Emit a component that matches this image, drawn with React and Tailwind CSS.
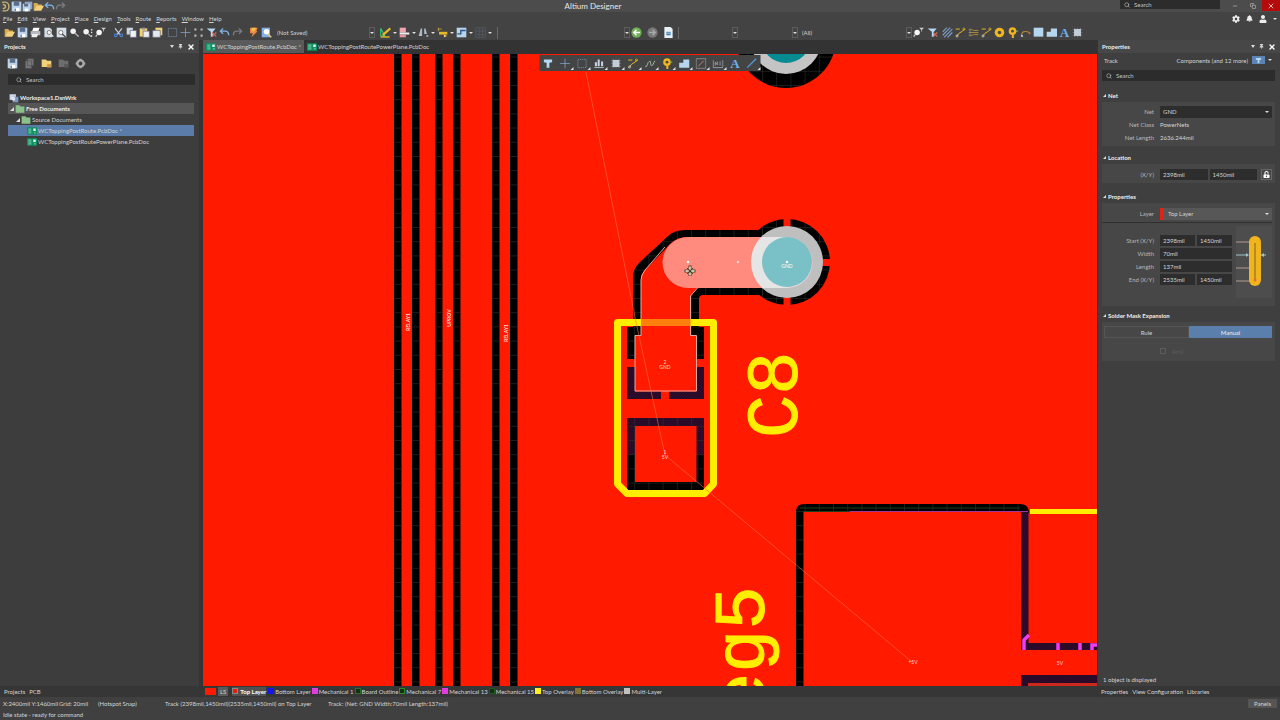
import React from 'react';
import { FiCopy, FiMinus, FiSearch, FiX } from 'react-icons/fi';
import { FaBell, FaCog, FaUser, FaThumbtack, FaUnlockAlt } from 'react-icons/fa';

const PAPER = '#d5dde6';
const STEEL = '#b9d3ec';
const GOLD = '#e8b923';
const SAND = '#f2cf7a';

const GLYPHS = {
  open: <><path d="M1 3h5l2 2h5v3H5l-4 6z" fill="#d9ab4e" /><path d="M5 7h11l-4 7H1z" fill={SAND} /></>,
  save: <><path d="M1 1h14v14H1z" fill={STEEL} /><path d="M4 1h8v6H4z" fill="#5b6f8c" /><path d="M4 10h8v5H4z" fill="#fff" /><path d="M5 11h2v4H5z" fill="#5b6f8c" /></>,
  saveAll: <><path d="M4 1h11v11H4z" fill="#8fa5c8" /><path d="M1 4h11v11H1z" fill={STEEL} /><path d="M3 4h6v4H3z" fill="#5b6f8c" /><path d="M4 11h5v4H4z" fill="#fff" /></>,
  print: <><path d="M5 1h9l-2 5H3z" fill="#fff" /><path d="M1 6h14v6H1z" fill="#b8bcc2" /><path d="M3 10h9l-2 5H2z" fill="#eee" /></>,
  preview: <><path d="M2 1h8l3 3v11H2z" fill={PAPER} /><circle cx="9" cy="8" r="3" fill="#f4f4f4" stroke="#555" /><path d="m11 10 4 4" stroke="#eee" strokeWidth="2" /></>,
  docFind: <><path d="M1 1h14v14H1z" fill={PAPER} /><circle cx="7" cy="8" r="3" fill="#fff" stroke="#555" /><path d="m9 10 5 5" stroke="#444" strokeWidth="2" /></>,
  zoom: <><circle cx="6" cy="6" r="4" fill="#f2f2f2" /><path d="m9 9 5 5" stroke="#bbb" strokeWidth="2" /></>,
  zoomArea: <><circle cx="6" cy="7" r="4" fill="#f2f2f2" /><path d="m9 10 4 4" stroke="#bbb" strokeWidth="2" /><path d="M13 3h2v2h-2zM13 7h2v2h-2zM13 12h2v2h-2z" fill="#ddd" /></>,
  zoomFilter: <><circle cx="6" cy="8" r="4" fill="#f8f8f8" /><path d="m3 11-2 3" stroke="#ccc" strokeWidth="2" /><path d="M9 1h7l-3 3v3l-1-1V4z" fill="#cfd5dc" /></>,
  cut: <><path d="m3 2 7 9M13 2 6 11" stroke="#c8d4e4" strokeWidth="1.6" /><circle cx="4" cy="12" r="2" fill="none" stroke="#4f7fd0" strokeWidth="1.6" /><circle cx="12" cy="12" r="2" fill="none" stroke="#4f7fd0" strokeWidth="1.6" /></>,
  copy: <><path d="M1 1h9v10H1z" fill="#c9d6e2" /><path d="M6 5h9v10H6z" fill="#f0f4f8" stroke="#667" /></>,
  paste: <><path d="M1 2h11v12H1z" fill={SAND} /><path d="M4 1h5v3H4z" fill="#999" /><path d="M6 6h9v9H6z" fill="#e8eef4" stroke="#667" /></>,
  pasteArray: <><path d="M5 1h10v11H5z" fill={SAND} /><path d="M1 5h11v10H1z" fill="#e3e9ef" stroke="#667" /></>,
  marquee: <path d="M2 2h12v12H2z" fill="none" stroke="#7e9cc0" strokeDasharray="2 1" />,
  cross: <path d="M8 1v14M1 8h14" stroke="#7f9dbf" strokeWidth="1.2" />,
  dots: <path d="M2 2h3v3H2zM11 2h3v3h-3zM2 11h3v3H2zM11 11h3v3h-3z" fill="#b8b8b8" />,
  filter: <path d="M2 2h12v4l-4 1v7H6V7L2 6z" fill="#b5d7f2" />,
  filterClear: <><path d="M1 2h13l-4 5v7H7V7z" fill="#b5d7f2" /><path d="m9 8 6 6M15 8l-6 6" stroke="#d46a60" strokeWidth="1.6" /></>,
  undo: <path d="M2 6h7q5 0 5 6M6 2 2 6l4 4" fill="none" stroke="#7fb2e6" strokeWidth="2" />,
  redo: <path d="M14 6H7q-5 0-5 6M10 2l4 4-4 4" fill="none" stroke="#787d82" strokeWidth="2" />,
  bolt: <><path d="M3 1h11l-2 5h2L5 15l2-6H3z" fill="#f08a3c" /><path d="M6 1h6l-3 5H5z" fill="#f8bd50" /></>,
  inspect: <><path d="M1 1h12v14H1z" fill="#82afe8" /><circle cx="8" cy="7" r="4" fill="#fff" /><path d="m10 10 5 5" stroke={SAND} strokeWidth="2" /></>,
  draw: <><path d="M1 2v11h6z" stroke="#39c67a" strokeWidth="1.6" /><path d="m15 2-9 8-2 2" stroke={GOLD} strokeWidth="3" fill="none" /><path d="M1 14.500h13" stroke={GOLD} strokeWidth="2" /></>,
  align: <><path d="M1 1h9v7H1z" fill="#f0a4ac" /><path d="M1 8h14v3H1z" fill="#eee" /><path d="M1 11h9v4H1z" fill="#e4949e" /></>,
  find: <path d="M4 2h2v11H1zM9 2h2l2 8H9zM12 12h3v2h-3z" fill="#aeb9c5" />,
  dimension: <><path d="M1 3h6M2 1v5" stroke="#c99a3c" strokeWidth="1.3" /><path d="M3 7h12v4H3z" fill={GOLD} /><path d="m10 11 5 2-5 2" fill={SAND} /></>,
  room: <><path d="M1 1h14v14H1z" fill={STEEL} /><path d="M2 10h5V5h7" stroke="#2b5687" strokeWidth="2" fill="none" /></>,
  grid: <path d="M1 1h14v14H1zM1 6h14M1 11h14M6 1v14M11 1v14" fill="none" stroke="#51565f" strokeWidth="1.4" />,
  back: <><circle cx="8" cy="8" r="7.5" fill="#6fae55" /><path d="M13 8H4M8 4 4 8l4 4" stroke="#fff" strokeWidth="2" fill="none" /></>,
  forward: <><circle cx="8" cy="8" r="7.5" fill="#777" /><path d="M3 8h9M8 4l4 4-4 4" stroke="#aaa" strokeWidth="2" fill="none" /></>,
  sheet: <><path d="M2 0h9l3 3v13H2z" fill="#e9f1f8" /><path d="M5 7h6v5H5z" fill="#3b7cae" /><path d="M6 9h4" stroke="#fff" /></>,
  hatch: <path d="M1 7 7 1M1 12 12 1M3 15 15 3M8 15l7-7" stroke="#7da0cc" strokeWidth="1.6" />,
  route: <><path d="M2 14 6 9l5-3 3-3M1 3h6" stroke={GOLD} strokeWidth="1.4" fill="none" /><circle cx="3" cy="13" r="1.6" fill="none" stroke="#d5d5d5" /><circle cx="13" cy="3" r="1.6" fill="none" stroke={GOLD} /></>,
  diffPair: <><path d="M1 4h5l2 1h7M1 8h14M1 12h5l2-1h7" stroke="#b5913a" strokeWidth="1.3" fill="none" /><path d="M3 2v12" stroke="#7b8da0" /></>,
  wave: <path d="M1 12q2 2 3-2t3-5q2-2 2 3t3 2l3-6" fill="none" stroke="#a9b8a0" strokeWidth="1.4" />,
  pad: <><circle cx="8" cy="8" r="7" fill="#f0b41c" /><circle cx="8" cy="8" r="2.5" fill="#474747" /></>,
  via: <><circle cx="8" cy="6" r="5.5" fill="#f0b41c" /><circle cx="8" cy="6" r="2" fill="#474747" /><path d="M7 11h3v5H7z" fill="#f0b41c" /><path d="M13 6h3" stroke="#62b060" strokeWidth="2" /></>,
  arc: <><path d="M2 14Q2 3 14 8" fill="none" stroke="#b78937" strokeWidth="1.5" /><circle cx="3" cy="13" r="1.5" fill="#c4ccd4" /><circle cx="14" cy="9" r="1.5" fill="#c86e4a" /></>,
  fill: <path d="M1 1h14v13H1z" fill="#b5d6ee" />,
  polygon: <path d="M1 7h6V2h9v12H1z" fill="#b5d6ee" />,
  component: <><path d="M4 1v14M8 1v14M12 1v14M1 4h14M1 8h14M1 12h14" stroke="#888" /><path d="M3 3h10v10H3z" fill="#c3cdd6" /></>,
  columns: <path d="M2 6h3v6H2zM6 2h3v10H6zM11 5h3v7h-3zM1 13h14v1H1z" fill="#c6d3df" />,
  box: <><path d="M1 1h14v14H1z" fill="none" stroke="#a2a2a2" /><path d="M4 12 12 4" stroke="#c68a72" strokeWidth="1.4" /></>,
  measure: <path d="M1 3v11h14V3M4 11V6l3 4V5M11 5v6" fill="none" stroke="#9fa8b1" strokeWidth="1.2" />,
  line: <path d="M1 14 14 1" stroke="#4f9bd8" strokeWidth="2" />,
  stack: <path d="M5 1h9v10H5zM2 4h9v11H2z" fill="#777" stroke="#555" />,
  folderGold: <><path d="M1 2h6l2 2h6v9H1z" fill={SAND} /><path d="M9 9h6v5H9z" fill="#c99446" /></>,
  folderGrey: <><path d="M1 2h6l2 2h6v9H1z" fill="#6d6d6d" /><path d="M9 9h6v5H9z" fill="#575757" /></>,
  folderGreen: <path d="M1 2h6l2 2h6v10H1z" fill="#8cc08a" />,
  gear: <><circle cx="8" cy="8" r="4.500" fill="none" stroke="#aaa" strokeWidth="3.5" /><path d="M8 1v2M8 13v2M1 8h2M13 8h2" stroke="#aaa" strokeWidth="3" /></>,
  workspace: <><path d="M1 2h10v9H1z" fill="#cfd8ec" /><path d="M6 6h9v9H6z" fill="#7f97c4" /><circle cx="7" cy="9" r="3" fill="#dfe7f5" /></>,
  pcb: <><path d="M0 2h16v12H0z" fill="#0d8f60" /><path d="M2 5h5M2 8h5M2 11h5M11 11h3" stroke="#8fe0be" strokeWidth="1.4" /><path d="M10 4h4v4h-4z" fill="#dff5ec" /></>,
  logo: <path d="M3 2q10-2 10 6t-9 6M4 5q4 0 4 3t-4 3" fill="none" stroke="#c8b273" strokeWidth="2" />,
};

const Glyph = ({ name, className = 'size-[11px]' }) =>
  name === 'text' ? (
    <span className="font-['Liberation_Serif',serif] text-[13px] leading-none font-bold text-[#6fb2ec]">A</span>
  ) : (
    <svg viewBox="0 0 16 16" fill="none" className={`shrink-0 ${className}`} aria-hidden="true">
      {GLYPHS[name]}
    </svg>
  );

const Tool = ({ name }) => (
  <button aria-label={name} className="flex h-3 w-[13px] shrink-0 items-center justify-center">
    <Glyph name={name} />
  </button>
);

const Tools = ({ names, className = '' }) => (
  <div className={`flex ${className}`}>
    {names.map((n, i) => <Tool key={i} name={n} />)}
  </div>
);

const Caret = ({ className = '' }) => (
  <span className={`h-0 w-0 shrink-0 border-x-2 border-t-2 border-x-transparent border-t-[#ddd] ${className}`} />
);

const DropTool = ({ name }) => (
  <button aria-label={name} className="flex h-3 w-[19px] shrink-0 items-center gap-[2px]">
    <Glyph name={name} />
    <Caret />
  </button>
);

const Combo = ({ label, value, className }) => (
  <div className={`relative shrink-0 ${className}`}>
    <select aria-label={label} className="h-[11px] w-full appearance-none bg-transparent pl-1 outline-none">
      <option>{value}</option>
    </select>
    <span className="pointer-events-none absolute inset-y-0 right-0 flex w-[6px] items-center justify-center border border-[#5c5c5c]">
      <Caret />
    </span>
  </div>
);

const SearchBox = ({ className }) => (
  <label className={`flex items-center gap-1 bg-[#2c2c2c] ${className}`}>
    <FiSearch size={6} className="shrink-0" />
    <input type="search" aria-label="Search" placeholder="Search" className="w-full bg-transparent outline-none placeholder:text-[#c4c4c4]" />
  </label>
);

const PanelHeader = ({ title }) => (
  <div className="flex h-[13px] shrink-0 items-center gap-1 bg-[#474747] px-1">
    <h2 className="mr-auto font-bold text-[#eee]">{title}</h2>
    <button aria-label="Panel menu" className="flex"><Caret className="border-t-[3px]" /></button>
    <button aria-label="Pin"><FaThumbtack size={5} /></button>
    <button aria-label="Close" className="text-white"><FiX size={8} strokeWidth={4} /></button>
  </div>
);

const MENUS = ['File', 'Edit', 'View', 'Project', 'Place', 'Design', 'Tools', 'Route', 'Reports', 'Window', 'Help'];

const TopBars = () => (
  <header className="shrink-0">
    <div className="flex h-3 items-start bg-[#4c4c4c]">
      <div className="flex flex-6 items-center">
        <Tools names={['logo', 'save', 'saveAll', 'open', 'undo', 'redo']} className="[&>button]:w-[11px]" />
      </div>
      <h1 className="pt-px text-[8px] leading-[10px] text-[#e6e6e6]">Altium Designer</h1>
      <div className="flex flex-7 justify-end">
        <SearchBox className="mr-[6px] h-[9px] w-[100px] px-1" />
        <button aria-label="Minimize" className="flex h-[11px] w-[18px] items-center justify-center"><FiMinus size={6} /></button>
        <button aria-label="Restore" className="flex h-[11px] w-[18px] items-center justify-center"><FiCopy size={6} /></button>
        <button aria-label="Close" className="flex h-[11px] w-[18px] items-center justify-center bg-[#b40c0c] text-white"><FiX size={8} /></button>
      </div>
    </div>
    <nav className="flex h-[13px] items-center bg-[#434343] pr-[3px] pl-[3px]">
      <div className="flex gap-[5px]">
        {MENUS.map((m) => (
          <button key={m} className="first-letter:underline">{m}</button>
        ))}
      </div>
      <div className="ml-auto flex items-center gap-[6px] text-[#eee]">
        <button aria-label="Settings"><FaCog size={8} /></button>
        <button aria-label="Notifications"><FaBell size={7} /></button>
        <button aria-label="Account"><FaUser size={8} /></button>
        <Caret />
      </div>
    </nav>
    <div className="flex h-[15px] items-center bg-[#434343] pl-[3px]">
      <Tools names={['open', 'save', 'print', 'preview', 'docFind', 'zoom', 'zoomArea', 'zoomFilter']} />
      <Tools className="ml-[5px]" names={['cut', 'copy', 'paste', 'pasteArray']} />
      <Tools className="ml-[2px]" names={['marquee', 'cross', 'dots', 'filterClear', 'undo', 'redo']} />
      <Tools className="ml-[3px]" names={['bolt', 'inspect']} />
      <Combo label="View" value="(Not Saved)" className="w-[102px]" />
      <div className="ml-[5px] flex border-r border-[#6a6a6a] pr-[3px]">
        {['draw', 'align', 'find', 'dimension', 'room', 'grid'].map((n) => <DropTool key={n} name={n} />)}
      </div>
      <Combo label="Address" value="" className="w-[132px]" />
      <Tools names={['back', 'forward', 'sheet']} className="gap-[3px] border-r border-[#6a6a6a] pr-[3px]" />
      <Combo label="Net" value="" className="w-[59px]" />
      <Combo label="Component" value="" className="w-[60px]" />
      <Combo label="Filter" value="(All)" className="w-[114px]" />
      <Tools names={['zoomFilter', 'filterClear']} className="gap-px" />
      <Tools className="ml-[2px]" names={['hatch', 'route', 'diffPair', 'route', 'pad', 'via', 'arc', 'fill', 'polygon', 'text', 'component']} />
    </div>
  </header>
);

const TreeRow = ({ icon, label, className = '', open }) => (
  <li className={`flex h-[11px] items-center ${className}`}>
    {open && <span className="h-0 w-0 border-b-4 border-l-4 border-b-[#ddd] border-l-transparent" />}
    <Glyph name={icon} className="mx-px size-[10px]" />
    {label}
  </li>
);

const ProjectsPanel = () => (
  <aside className="flex w-[203px] shrink-0 flex-col border-r-4 border-[#353535] bg-[#3d3d3d]">
    <PanelHeader title="Projects" />
    <Tools names={['save', 'stack', 'folderGold', 'folderGrey', 'gear']} className="mt-1 gap-1 px-[6px]" />
    <SearchBox className="mx-2 mt-[5px] mr-1 h-[11px] px-2" />
    <ul className="mt-[7px] mr-[5px] ml-2 pb-1">
      <TreeRow icon="workspace" label="Workspace1.DsnWrk" className="font-bold text-[#eee]" />
      <TreeRow icon="folderGreen" label="Free Documents" open className="bg-[#565656] pl-[2px] font-bold text-[#eee]" />
      <TreeRow icon="folderGreen" label="Source Documents" open className="pl-2" />
      <TreeRow icon="pcb" label="WCToppingPostRoute.PcbDoc *" className="bg-[#5b7ca8] pl-[18px]" />
      <TreeRow icon="pcb" label="WCToppingPostRoutePowerPlane.PcbDoc" className="pl-[18px]" />
    </ul>
    <div className="mt-auto flex h-[11px] items-center gap-1 bg-[#363636] px-1 pb-px">
      <button>Projects</button>
      <button>PCB</button>
    </div>
  </aside>
);

const TRACKS = [394, 412, 435, 453, 492, 510];

const Board = () => (
  <svg viewBox="203 54 894 632" preserveAspectRatio="xMidYMid slice" className="absolute inset-0 h-full w-full" fill="none">
    <defs>
      <pattern id="grid" x="762" y="298" width="14.2" height="14.2" patternUnits="userSpaceOnUse">
        <path d="M0 .5h14.2M.5 0v14.2" stroke="#2b2f2b" strokeWidth=".6" />
      </pattern>
      <pattern id="mask" width="3" height="3" patternUnits="userSpaceOnUse">
        <path d="M0 0h3v3H0z" fill="#260a25" />
        <path d="m0 3 3-3" stroke="#3a1038" strokeWidth=".7" />
      </pattern>
      <clipPath id="capsule"><path d="M688 237h99a25.500 25.500 0 0 1 0 51h-99a25.500 25.500 0 0 1 0-51z" /></clipPath>
    </defs>
    <path d="M203 54h894v632H203z" fill="#ff1a00" />

    {/* Relay tracks */}
    {TRACKS.map((x) => (
      <g key={x}>
        <path d={`M${x} 54h7.500v632h-7.500z`} fill="#000" />
        <path d={`M${x} 54h7.500v632h-7.500z`} fill="url(#grid)" />
      </g>
    ))}

    {/* Upper via */}
    <circle cx="786" cy="38" r="50" fill="#000" />
    <circle cx="786" cy="38" r="50" fill="url(#grid)" />
    <circle cx="786" cy="38" r="36" fill="#c4c4c4" />
    <circle cx="786" cy="38" r="25" fill="#078b93" />

    {/* Clearance around the GND track and via */}
    <circle cx="787" cy="262" r="43" fill="#000" />
    <path d="M633 336v-58q0-9 6-15l28-26q7-7 18-7h90v65h-72q-4 0-4 4v37z" fill="#000" />
    <circle cx="787" cy="262" r="43" fill="url(#grid)" />
    <path d="M633 336v-58q0-9 6-15l28-26q7-7 18-7h90v65h-72q-4 0-4 4v37z" fill="url(#grid)" />
    <path d="M783.500 218h7v12h-7zM783.500 294h7v12h-7zM820 259h12v7h-12z" fill="#ff1a00" />

    {/* Pads */}
    <path d="M627 327h77v32h-77z" fill="#000" />
    <path d="M627 327h77v32h-77z" fill="url(#grid)" />
    <path d="M627 367h77v32h-77z" fill="url(#mask)" />
    <path d="M661 391h8v9h-8z" fill="#ff1a00" />
    <path d="M627 418h77v37h-77z" fill="url(#mask)" />
    <path d="M627 455h77v35h-77z" fill="#000" />
    <path d="M627 418h77v72h-77z" fill="url(#grid)" />
    <path d="M635 426h61.500v56H635z" fill="#ff1a00" />

    <path d="M641 336v-56q0-6 4-10l26-27q6-6 17-6h60v51h-51l-6.500 8v40h6v55.500H635V336z" fill="#ff1a00" />
    <path d="M665 247l-20 23q-4 5-4 10v55.500h-6v55.500h61.500v-55.500h-6V296l7-8" stroke="#ffb9ae" strokeWidth=".9" />

    {/* Selected track segment ending on the via */}
    <circle cx="787" cy="262" r="36" fill="#bfbfbf" />
    <path d="M688 237h99a25.500 25.500 0 0 1 0 51h-99a25.500 25.500 0 0 1 0-51z" fill="#ff8a7e" />
    <circle cx="787" cy="262" r="36" fill="#e5e5e5" clipPath="url(#capsule)" />
    <path d="M787 237a25.500 25.500 0 0 1 0 51l36 8v-68z" fill="#bfbfbf" clipPath="url(#capsule)" />
    <circle cx="787" cy="262" r="25" fill="#79c1c7" />
    <circle cx="688" cy="262" r="1.300" fill="#fff" />
    <circle cx="738" cy="262" r="1.300" fill="#ffd3cd" />
    <circle cx="787" cy="262" r="1.300" fill="#fff" />

    {/* Overlay */}
    <path d="M617.500 322.500h96V484l-9 9.500h-77.500l-9.500-9.500z" stroke="#ffee00" strokeWidth="7" strokeLinejoin="round" />
    <path d="M641 319h49.500v7H641z" fill="#ff7f0c" />
    <g fill="#ffee00" stroke="#ffee00" strokeWidth="1" className="font-['Liberation_Mono',monospace] text-[72px]">
      <text transform="translate(797 438) rotate(-90)">C8</text>
      <text transform="translate(764 716) rotate(-90)">eg5</text>
    </g>

    {/* Lower right component */}
    <path d="M800 686V512q0-4 4-4h216q5 0 5 5" stroke="#000" strokeWidth="8" />
    <path d="M796 504h232v8H796zM796 512h8v174h-8z" fill="url(#grid)" />
    <path d="M803.500 686V511.500H850M800 508h220" stroke="#18401c" strokeWidth="1" />
    <path d="M850 511.500h178" stroke="#a0359c" strokeWidth="1" />
    <path d="M1021 512h7.500v131H1097v7h-76z" fill="url(#mask)" />
    <path d="M1021 675h76v8h-68.500v3H1021z" fill="url(#mask)" />
    <path d="M1028 683h69v3h-69z" fill="#cc281c" />
    <path d="M1030 511.500h67" stroke="#ffee00" strokeWidth="5" />
    <path d="M1024 650v-10l5-5M1058 643v7M1080 643v7M1092 650v-5h5" stroke="#f03cf0" strokeWidth="3.500" />

    {/* Rat lines */}
    <path d="M586 72l50 250 29 133 247 207" stroke="#ff7448" strokeWidth=".7" opacity=".8" />

    <g fill="#ffd9d3" textAnchor="middle" className="text-[5px]">
      <text transform="translate(410 322) rotate(-90)" className="font-bold">RELAY1</text>
      <text transform="translate(451 318) rotate(-90)" className="font-bold">UPROV</text>
      <text transform="translate(508 333) rotate(-90)" className="font-bold">RELAY1</text>
      <text x="665" y="364">2</text>
      <text x="665" y="369">GND</text>
      <text x="665" y="454">1</text>
      <text x="665" y="459">5V</text>
      <text x="787" y="268" fill="#fff">GND</text>
      <text x="913" y="664">+5V</text>
      <text x="1060" y="665">5V</text>
    </g>

    {/* Move cursor */}
    <g stroke="#442" strokeWidth="3">
      <path d="M690 265.500v4M690 272v4M684.500 271h4M691.500 271h4" />
      <path d="m687 268 6 6M693 268l-6 6" strokeWidth="1" />
      <path d="M690 266.500v3M690 272.500v3M685.500 271h3M691.500 271h3" stroke="#eee" strokeWidth="1.500" />
    </g>
  </svg>
);

const ACTIVE_BAR = ['filter', 'cross', 'marquee', 'columns', 'component', 'route', 'wave', 'via', 'polygon', 'box', 'measure', 'text', 'line'];

const LAYERS = [
  { name: 'Bottom Layer', color: '#1515ee' },
  { name: 'Mechanical 1', color: '#e03ce0' },
  { name: 'Board Outline', color: '#2b6b2f', hollow: true },
  { name: 'Mechanical 7', color: '#2b8b2f', hollow: true },
  { name: 'Mechanical 13', color: '#e03ce0' },
  { name: 'Mechanical 15', color: '#1b5b1f', hollow: true },
  { name: 'Top Overlay', color: '#ffee22' },
  { name: 'Bottom Overlay', color: '#857331' },
  { name: 'Multi-Layer', color: '#c0c0c0' },
];

const Editor = () => (
  <main className="flex min-w-0 flex-1 flex-col bg-[#333]">
    <div className="flex h-[14px] shrink-0 items-stretch pb-px">
      <button className="flex items-center gap-px bg-[#5a5a5a] px-[3px]">
        <Glyph name="pcb" className="size-[10px]" />WCToppingPostRoute.PcbDoc *
      </button>
      <button className="flex items-center gap-px px-[3px]">
        <Glyph name="pcb" className="size-[10px]" />WCToppingPostRoutePowerPlane.PcbDoc
      </button>
    </div>
    <div className="relative min-h-0 flex-1 overflow-hidden bg-[#ff1a00]">
      <Board />
      <div className="absolute top-px left-1/2 flex h-4 w-[221px] -translate-x-1/2 bg-[#444]">
        {ACTIVE_BAR.map((n) => (
          <button key={n} aria-label={n} className="relative flex w-[17px] items-center justify-center">
            <Glyph name={n} />
            {n !== 'filter' && n !== 'text' && (
              <span className="absolute right-0 bottom-px border-b-[3px] border-l-[3px] border-b-[#ddd] border-l-transparent" />
            )}
          </button>
        ))}
      </div>
    </div>
    <div className="flex h-[11px] shrink-0 items-center gap-[2px] overflow-hidden bg-[#363636] pb-px pl-[2px] whitespace-nowrap">
      <span className="h-[7px] w-[11px] bg-[#ff1a00]" />
      <button className="mr-[2px] bg-[#5a5a5a] px-[2px]">LS</button>
      <button className="flex items-center gap-[2px] bg-[#505050] font-bold text-white">
        <span className="size-[6px] border border-[#888] bg-[#e02010]" />Top Layer
      </button>
      <div className="flex gap-px">
        {LAYERS.map((l) => (
          <button key={l.name} className="flex items-center gap-px">
            <span className="size-[6px] border" style={{ borderColor: l.color, background: l.hollow ? '#123016' : l.color }} />
            {l.name}
          </button>
        ))}
      </div>
    </div>
  </main>
);

const Section = ({ title, children, className = '' }) => (
  <section>
    <h3 className="flex h-[14px] items-center gap-[2px] pl-[5px] font-bold text-[#eee]">
      <span className="border-b-[3px] border-l-[3px] border-b-[#ddd] border-l-transparent" />
      {title}
    </h3>
    <div className={`mr-[5px] ml-1 bg-[#474747] ${className}`}>{children}</div>
  </section>
);

const Field = ({ label, children }) => (
  <div className="flex h-[13px] items-center gap-[6px]">
    <span className="w-[52px] shrink-0 text-right text-[#b8b8b8]">{label}</span>
    {children}
  </div>
);

const Value = ({ label, value, className = '' }) => (
  <input aria-label={label} defaultValue={value} className={`h-[11px] min-w-0 bg-[#2d2d2d] px-[3px] outline-none ${className}`} />
);

const Picker = ({ label, value, className }) => (
  <span className="relative min-w-0 flex-1">
    <select aria-label={label} className={`block h-3 w-full appearance-none outline-none ${className}`}>
      <option>{value}</option>
    </select>
    <Caret className="pointer-events-none absolute top-[5px] right-[3px]" />
  </span>
);

const TrackDiagram = () => (
  <svg viewBox="0 0 36 72" className="h-[72px] w-9 shrink-0 bg-[#4d4d4d]" fill="none">
    <path d="M-2 16h20M0 42h18M-2 55h20" stroke="#b59a8e" />
    <rect x="13" y="10" width="12" height="50" rx="6" fill="#f0b41c" />
    <path d="M19 17v38" stroke="#806520" />
    <path d="M-5 29h17M25 29h5" stroke="#9ec6cc" />
    <path d="m10 27 3 2-3 2zM28 27l-3 2 3 2z" fill="#9ec6cc" />
    <circle cx="19" cy="54" r="1.500" fill="#e8683c" />
  </svg>
);

const PropertiesPanel = () => (
  <aside className="flex w-[183px] shrink-0 flex-col border-l border-[#353535] bg-[#3f3f3f]">
    <PanelHeader title="Properties" />
    <div className="flex h-[14px] items-center pr-2 pl-[6px]">
      <span className="mr-auto">Track</span>
      <span>Components (and 12 more)</span>
      <button aria-label="Filter" className="ml-1 flex h-2 w-[13px] items-center justify-center bg-[#5b84b4]">
        <Glyph name="filter" className="size-[7px]" />
      </button>
      <Caret className="ml-[3px]" />
    </div>
    <SearchBox className="mt-[3px] mr-[5px] ml-1 h-[11px] px-1" />
    <div className="mt-[7px] flex flex-col gap-[2px]">
      <Section title="Net" className="mb-[2px] pt-[3px] pr-[3px] pb-[2px]">
        <Field label="Net"><Picker label="Net" value="GND" className="bg-[#2d2d2d] pl-[3px]" /></Field>
        <Field label="Net Class">PowerNets</Field>
        <Field label="Net Length">2636.244mil</Field>
      </Section>
      <Section title="Location" className="mb-1 pt-1 pr-[3px] pb-[2px]">
        <Field label="(X/Y)">
          <Value label="X" value="2398mil" className="-mr-1 flex-1" />
          <Value label="Y" value="1450mil" className="flex-1" />
          <button aria-label="Lock position" className="-ml-[2px] flex size-[11px] items-center justify-center border border-[#666] text-white">
            <FaUnlockAlt size={7} />
          </button>
        </Field>
      </Section>
      <Section title="Properties" className="pt-1 pr-[3px]">
        <Field label="Layer">
          <span className="-mr-[6px] h-3 w-1 bg-[#dd2415]" />
          <Picker label="Layer" value="Top Layer" className="bg-[#575757] pl-1" />
        </Field>
        <hr className="mt-[2px] border-[#303030]" />
        <div className="flex gap-1 pt-[3px] pb-2">
          <div className="flex-1 pt-2">
            <Field label="Start (X/Y)">
              <Value label="Start X" value="2398mil" className="-mr-1 w-0 flex-1" />
              <Value label="Start Y" value="1450mil" className="w-0 flex-1" />
            </Field>
            <Field label="Width"><Value label="Width" value="70mil" className="w-0 flex-1" /></Field>
            <Field label="Length"><Value label="Length" value="137mil" className="w-0 flex-1" /></Field>
            <Field label="End (X/Y)">
              <Value label="End X" value="2535mil" className="-mr-1 w-0 flex-1" />
              <Value label="End Y" value="1450mil" className="w-0 flex-1" />
            </Field>
          </div>
          <TrackDiagram />
        </div>
      </Section>
      <Section title="Solder Mask Expansion" className="pt-1 pr-[3px] pb-1 pl-[2px]">
        <div className="flex h-3">
          <button className="flex-1 border border-[#555]">Rule</button>
          <button className="flex-1 bg-[#5b7fad] text-[#eee]">Manual</button>
        </div>
        <label className="mt-[7px] ml-[56px] flex h-3 items-center gap-[6px] text-[#5c5c5c]">
          <input type="checkbox" disabled className="size-[6px] appearance-none border border-[#5c5c5c]" />
          4mil
        </label>
      </Section>
    </div>
    <p className="mt-auto mb-[2px] pl-[5px]">1 object is displayed</p>
    <div className="flex h-[11px] shrink-0 items-center gap-1 bg-[#363636] px-[3px] pb-px">
      <button>Properties</button>
      <button>View Configuration</button>
      <button>Libraries</button>
    </div>
  </aside>
);

const StatusBar = () => (
  <footer className="shrink-0 bg-[#404040] px-[3px]">
    <div className="flex h-[13px] items-center">
      <span className="w-[56px]">X:2400mil Y:1460mil</span>
      <span className="w-[39px]">Grid: 20mil</span>
      <span className="w-[67px]">(Hotspot Snap)</span>
      <span className="w-[163px]">Track (2398mil,1450mil)(2535mil,1450mil) on Top Layer</span>
      <span>Track: (Net: GND Width:70mil Length:137mil)</span>
      <button className="ml-auto h-[9px] bg-[#555] px-[6px]">Panels</button>
    </div>
    <p className="h-[10px]">Idle state - ready for command</p>
  </footer>
);

export default function App() {
  return (
    <div className="flex h-screen flex-col overflow-hidden bg-[#404040] font-['Lato','Open_Sans',sans-serif] text-[6px] leading-[9px] whitespace-nowrap text-[#d4d4d4]">
      <TopBars />
      <div className="flex min-h-0 flex-1">
        <ProjectsPanel />
        <Editor />
        <PropertiesPanel />
      </div>
      <StatusBar />
    </div>
  );
}
